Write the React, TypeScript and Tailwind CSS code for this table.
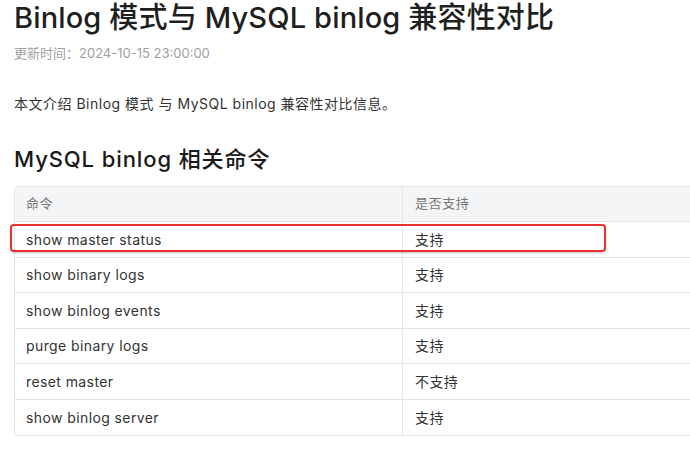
const rows = [
  { cmd: 'show master status', ok: '支持' },
  { cmd: 'show binary logs', ok: '支持' },
  { cmd: 'show binlog events', ok: '支持' },
  { cmd: 'purge binary logs', ok: '支持' },
  { cmd: 'reset master', ok: '不支持' },
  { cmd: 'show binlog server', ok: '支持' },
]

export default function App() {
  return (
    <div
      className="relative w-[690px] h-[454px] overflow-hidden bg-white pl-[14px] text-[#333]"
      style={{ fontFamily: 'Inter, "Noto Sans CJK SC", sans-serif' }}
    >
      <h1 className="text-[29px] leading-[36px] font-medium tracking-[0.15px] text-[#1f1f1f] whitespace-nowrap">
        Binlog 模式与 MySQL binlog 兼容性对比
      </h1>
      <p className="mt-[8px] text-[13px] leading-[18px] text-[#a0a0a0]">更新时间：2024-10-15 23:00:00</p>

      <p className="mt-[32px] text-[14px] leading-[20px] tracking-[0.5px] text-[#333]">
        本文介绍 Binlog 模式 与 MySQL binlog 兼容性对比信息。
      </p>

      <h2 className="mt-[30px] text-[22px] leading-[30px] font-medium tracking-[0.9px] text-[#1a1a1a]">
        MySQL binlog 相关命令
      </h2>

      <div className="mt-[12px] w-[776px] rounded-[4px] border border-[#e3e5e9] overflow-hidden">
        <div className="flex h-[35px] bg-[#f4f5f7] border-b border-[#e3e5e9] text-[13px] text-[#777] tracking-[0.6px]">
          <div className="w-[388px] flex items-center pl-[11px] border-r border-[#e3e5e9]">命令</div>
          <div className="flex-1 flex items-center pl-[12px]">是否支持</div>
        </div>
        {rows.map((r, i) => (
          <div
            key={r.cmd}
            className={`flex h-[35.5px] text-[14px] text-[#333] tracking-[0.4px] ${i < rows.length - 1 ? 'border-b border-[#e3e5e9]' : ''}`}
          >
            <div className="w-[388px] flex items-center pl-[11px] border-r border-[#e3e5e9]">{r.cmd}</div>
            <div className="flex-1 flex items-center pl-[12px]">{r.ok}</div>
          </div>
        ))}
      </div>

      {/* red annotation box */}
      <div className="absolute left-[10px] top-[224px] w-[596px] h-[28px] rounded-[4px] border-2 border-[#e8322b] shadow-[0_1px_2px_rgba(0,0,0,0.25)]" />
    </div>
  )
}
